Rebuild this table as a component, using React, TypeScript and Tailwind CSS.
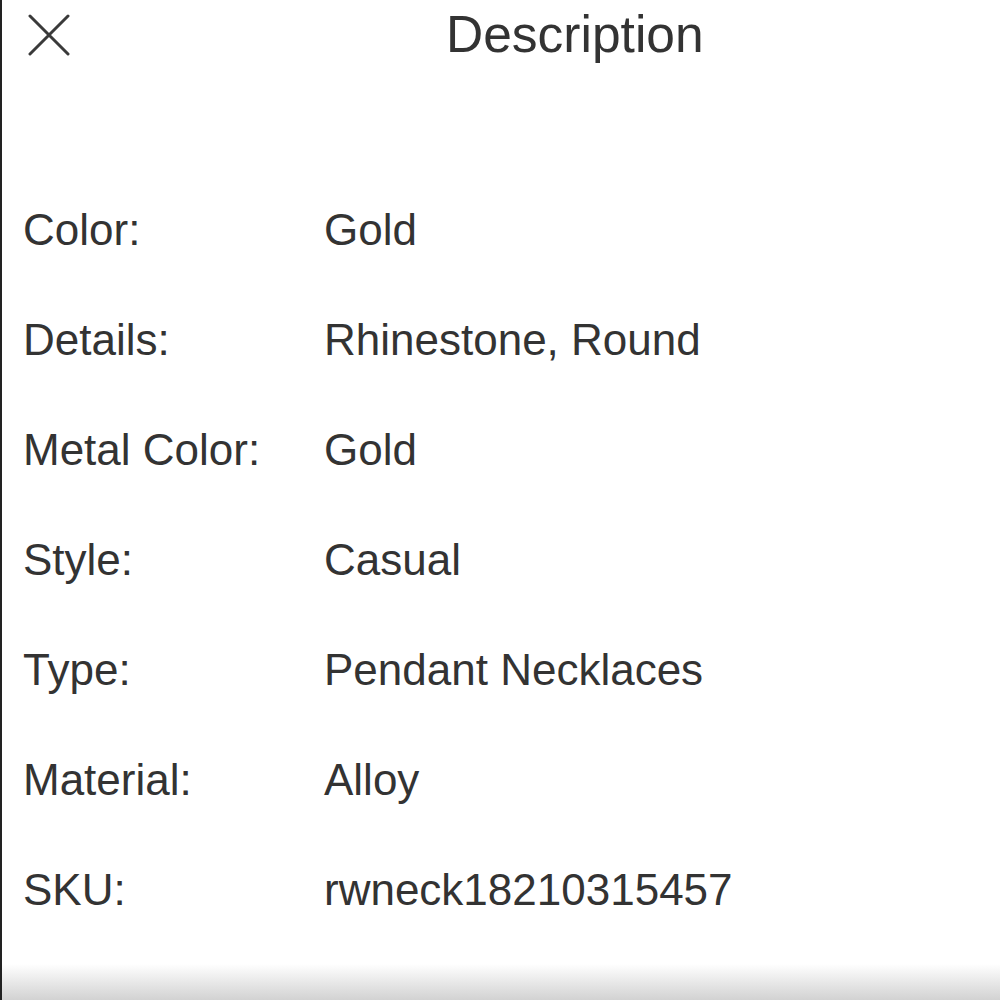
import React from "react";

const rows: [string, string][] = [
  ["Color:", "Gold"],
  ["Details:", "Rhinestone, Round"],
  ["Metal Color:", "Gold"],
  ["Style:", "Casual"],
  ["Type:", "Pendant Necklaces"],
  ["Material:", "Alloy"],
  ["SKU:", "rwneck18210315457"],
];

export default function App() {
  return (
    <div
      className="w-[1000px] h-[1000px] bg-white border-l-2 border-[#222] flex flex-col text-[#333]"
      style={{ fontFamily: '"Liberation Sans", Arial, sans-serif' }}
    >
      <div className="h-[70px] flex items-center">
        <svg
          className="ml-[26px] w-[42px] h-[42px] shrink-0"
          viewBox="0 0 42 42"
          fill="none"
          stroke="#3a3a3a"
          strokeWidth="3"
          strokeLinecap="round"
        >
          <path d="M2 2 L40 40 M40 2 L2 40" />
        </svg>
        <div className="ml-[376px] text-[51.5px] leading-none">Description</div>
      </div>
      <div className="pt-[105px] flex flex-col">
        {rows.map(([k, v]) => (
          <div key={k} className="h-[110px] flex items-center text-[44px] leading-none">
            <div className="w-[322px] pl-[21px] shrink-0">{k}</div>
            <div>{v}</div>
          </div>
        ))}
      </div>
      <div className="flex-1" />
      <div className="h-[36px] bg-gradient-to-b from-white to-[#d2d2d2]" />
    </div>
  );
}
